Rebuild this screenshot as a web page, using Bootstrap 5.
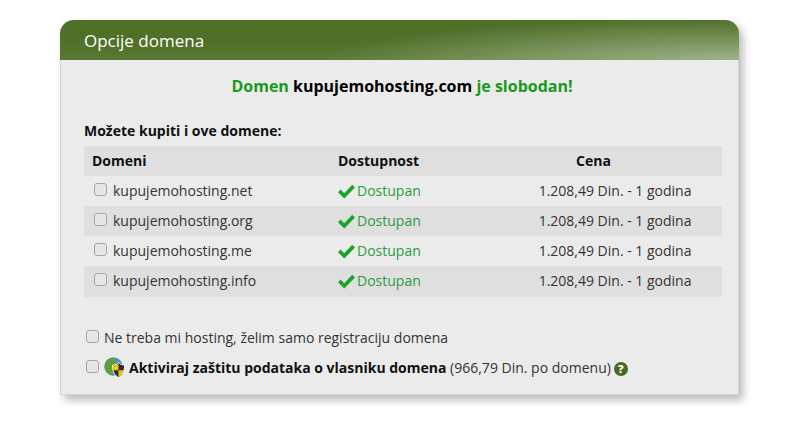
<!DOCTYPE html>
<html lang="sr">
<head>
<meta charset="utf-8">
<title>Opcije domena</title>
<link href="https://cdn.jsdelivr.net/npm/bootstrap@5.3.0/dist/css/bootstrap.min.css" rel="stylesheet">
<style>
html,body{background:#fff}
body{font-family:"Open Sans",sans-serif;font-size:14px;color:#333;line-height:20px}
.page-wrap{padding:20px 70px 30px 60px}
.opt-panel{width:679px;height:375px;background:#ebebeb;border:1px solid #d4d4d4;border-top:0;border-radius:14px 14px 0 0;box-shadow:4px 5px 9px rgba(0,0,0,.28)}
.opt-head{height:40px;margin:0 -1px;border-radius:14px 14px 0 0;padding-left:24px;color:#fff;font-size:17px;line-height:42px;
background:radial-gradient(ellipse 420px 42px at 100% 100%,rgba(255,255,255,.42),rgba(255,255,255,.2) 55%,rgba(255,255,255,0) 100%),linear-gradient(180deg,#4f6f27 0,#507129 60%,#5a7a35 100%)}
.opt-title{height:63px;padding:16px 0 0 5px;font-size:16px;line-height:20px;color:#000;text-align:center;font-weight:700}
.opt-title b{font-weight:700;color:#179a1c}
.opt-title strong{font-weight:700}
.opt-sub{padding-left:23px;height:17px;line-height:20px;font-weight:700;color:#111;margin-top:-2px}
.opt-table{width:638px;margin-left:23px;display:block}
.opt-row{display:flex;height:30px;line-height:30px;color:#333}
.opt-row.alt,.opt-row.top{background:#dfdfdf}
.opt-row.top{font-weight:700;color:#111}
.opt-row.end{height:31px;padding-bottom:1px}
.cell-a{width:254px;padding-left:8px;display:flex;align-items:center}
.cell-b{width:180px;color:#2c9c3c;display:flex;align-items:center}
.cell-c{width:204px;text-align:right;padding-right:30.5px}
.opt-row.top .cell-b{color:#111}
.opt-row.top .cell-c{padding-right:0;text-align:left;padding-left:58px}
.opt-check{width:13px;height:13px;margin:0 6px 4px 2px;border:1px solid #a6a6a6;border-radius:3px;background:#e6e6e6;appearance:none;flex:none}
.tick{width:17px;height:15px;margin-right:2px;flex:none}
.opt-bottom{margin-top:26px;padding-left:25px}
.opt-line{height:30px;display:flex;align-items:center;color:#333}
.opt-line .opt-check{margin:0 0 4px 0}
.opt-line strong{font-weight:700;color:#111}
.gap-a{margin-left:5px}
.shield{width:21px;height:21px;margin:0 4px 1px 5px;flex:none}
.help-dot{display:inline-block;width:14px;height:14px;border-radius:50%;background:#476b22;color:#fff;font-size:11px;line-height:14px;font-weight:800;text-align:center;margin-left:3px}
</style>
</head>
<body>
<div class="page-wrap">
  <div class="opt-panel">
    <div class="opt-head">Opcije domena</div>
    <div class="opt-title"><b>Domen</b> <strong>kupujemohosting.com</strong> <b>je slobodan!</b></div>
    <div class="opt-sub">Možete kupiti i ove domene:</div>
    <div class="opt-table mt-2">
      <div class="opt-row top"><div class="cell-a">Domeni</div><div class="cell-b">Dostupnost</div><div class="cell-c">Cena</div></div>
      <div class="opt-row"><div class="cell-a"><input type="checkbox" class="opt-check" aria-label="net">kupujemohosting.net</div><div class="cell-b"><svg class="tick" viewBox="0 0 17 15"><path fill="#18a52a" d="M0 8.2 2.6 5.6 6.2 9.2 14.2 .8 17 3.4 6.3 14.6Z"/></svg>Dostupan</div><div class="cell-c">1.208,49 Din. - 1 godina</div></div>
      <div class="opt-row alt"><div class="cell-a"><input type="checkbox" class="opt-check" aria-label="org">kupujemohosting.org</div><div class="cell-b"><svg class="tick" viewBox="0 0 17 15"><path fill="#18a52a" d="M0 8.2 2.6 5.6 6.2 9.2 14.2 .8 17 3.4 6.3 14.6Z"/></svg>Dostupan</div><div class="cell-c">1.208,49 Din. - 1 godina</div></div>
      <div class="opt-row"><div class="cell-a"><input type="checkbox" class="opt-check" aria-label="me">kupujemohosting.me</div><div class="cell-b"><svg class="tick" viewBox="0 0 17 15"><path fill="#18a52a" d="M0 8.2 2.6 5.6 6.2 9.2 14.2 .8 17 3.4 6.3 14.6Z"/></svg>Dostupan</div><div class="cell-c">1.208,49 Din. - 1 godina</div></div>
      <div class="opt-row alt end"><div class="cell-a"><input type="checkbox" class="opt-check" aria-label="info">kupujemohosting.info</div><div class="cell-b"><svg class="tick" viewBox="0 0 17 15"><path fill="#18a52a" d="M0 8.2 2.6 5.6 6.2 9.2 14.2 .8 17 3.4 6.3 14.6Z"/></svg>Dostupan</div><div class="cell-c">1.208,49 Din. - 1 godina</div></div>
    </div>
    <div class="opt-bottom">
      <div class="opt-line"><input type="checkbox" class="opt-check" aria-label="hosting"><span class="gap-a">Ne treba mi hosting, želim samo registraciju domena</span></div>
      <div class="opt-line"><input type="checkbox" class="opt-check" aria-label="zastita">
        <svg class="shield" viewBox="0 0 21 21"><circle cx="9.500" cy="9.500" r="9.200" fill="#4a97bb"/><path fill="#5f9e3a" d="M3 3.500C6 1 10 .5 12 2.500c.5 3-3 3.500-3.500 6.500s2.500 5 .5 9.500C5 18 1.500 15 .8 11c-.2-3 .7-5.500 2.200-7.500Z"/><path fill="#2c2c2c" stroke="#fff" stroke-width=".9" d="M8.500 8c3 0 5-1 6-2.500 1 1.500 3 2.500 6 2.500.3 6-2 10.500-6 12.500C10.500 18.500 8.200 14 8.500 8Z"/><path fill="#f0c419" d="M14.500 6.200v7H9.200C8.900 11.500 8.900 10 8.900 8.400c2.500 0 4.500-.9 5.600-2.200ZM14.500 13.200h5.100c-.7 3.100-2.600 5.500-5.100 6.900Z"/></svg>
        <span><strong>Aktiviraj zaštitu podataka o vlasniku domena</strong> (966,79 Din. po domenu)<span class="help-dot">?</span></span></div>
    </div>
  </div>
</div>
</body>
</html>
